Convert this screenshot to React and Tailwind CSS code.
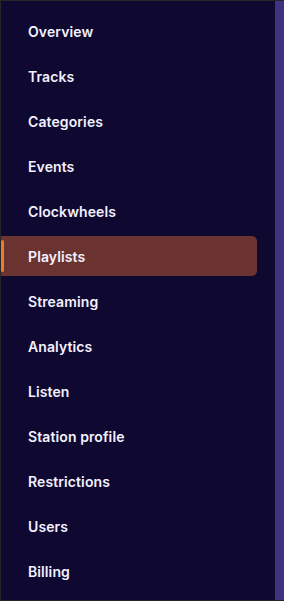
const items = [
  "Overview",
  "Tracks",
  "Categories",
  "Events",
  "Clockwheels",
  "Playlists",
  "Streaming",
  "Analytics",
  "Listen",
  "Station profile",
  "Restrictions",
  "Users",
  "Billing",
];

const NavItem = ({ label, active }) => (
  <div
    className={`relative flex items-center h-10 pl-[27px] rounded-r-[5px] w-[256px] ${
      active ? "bg-[#6b3330]" : ""
    }`}
  >
    {active && (
      <span className="absolute left-0 top-[4px] bottom-[4px] w-[3px] rounded-full bg-[#ec7a2f]" />
    )}
    <span className="text-[14px] font-semibold text-[#f3f1ff] tracking-[0.1px]">{label}</span>
  </div>
);

export default function App() {
  return (
    <div
      className="w-[284px] h-[601px] flex bg-[#0f0830] border-t border-l border-b border-[#262626] overflow-hidden"
      style={{ fontFamily: "Inter, 'Liberation Sans', sans-serif" }}
    >
      <nav className="flex-1 flex flex-col gap-[5px] pt-[10px]">
        {items.map((label) => (
          <NavItem key={label} label={label} active={label === "Playlists"} />
        ))}
      </nav>
      <div className="w-[9px] h-full bg-[#3f3381]" />
    </div>
  );
}
